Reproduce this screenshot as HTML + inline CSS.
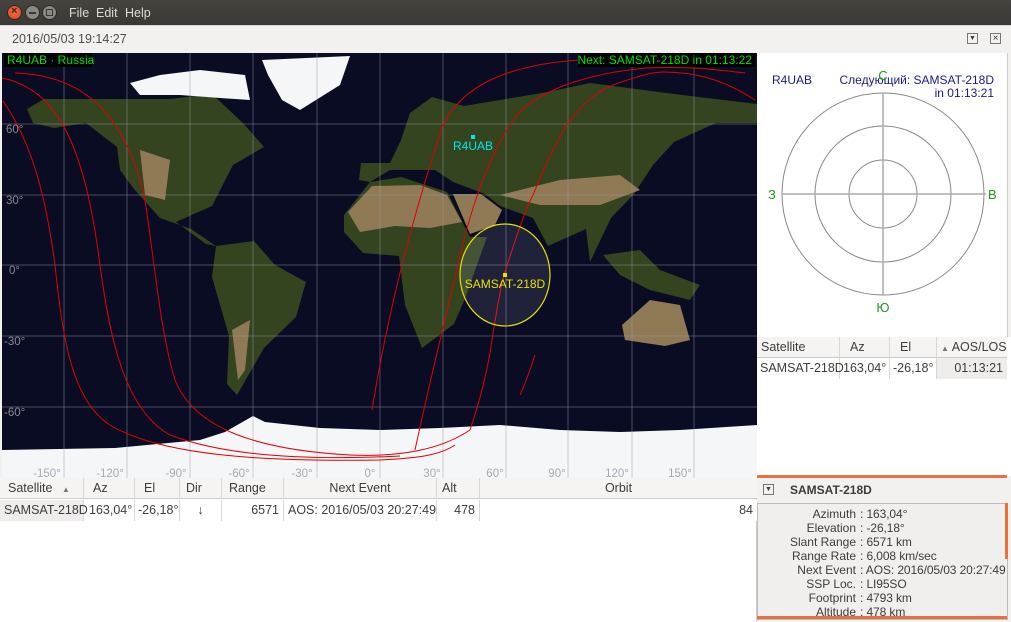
<!DOCTYPE html>
<html><head><meta charset="utf-8"><style>
*{margin:0;padding:0;box-sizing:border-box}
body{width:1011px;height:622px;overflow:hidden;background:#f2f1f0;font-family:"Liberation Sans","DejaVu Sans",sans-serif;font-size:12.5px;color:#3c3c3c;position:relative}
.abs{position:absolute}
.tb{left:0;top:0;width:1011px;height:25px;background:linear-gradient(#45443f,#3a3935);}
.btn{top:5px;width:15px;height:15px;border-radius:50%;}
.menu{top:6px;color:#dfdbd2;font-size:12.5px}
.hd{background:#f5f4f3;border-bottom:1px solid #cfcdca;height:21px}
.hd div,.row div{position:absolute;top:0;height:100%;line-height:21px;border-right:1px solid #dad8d5;padding:0 4px;white-space:nowrap}
.row{background:#fff;height:21px}
</style></head><body>
<div class="abs tb"></div>
<div class="abs btn" style="left:7px;background:radial-gradient(circle at 50% 40%,#f26d4a,#d9461f);border:1px solid #2b2a27"></div>
<div class="abs" style="left:11px;top:5px;color:#4a1b0c;font-size:11px;font-weight:bold">×</div>
<div class="abs btn" style="left:25px;background:#8a8984;border:1px solid #2b2a27"></div>
<div class="abs" style="left:29px;top:12px;width:7px;height:2px;background:#3a3935"></div>
<div class="abs btn" style="left:42px;background:#8a8984;border:1px solid #2b2a27"></div>
<div class="abs" style="left:46px;top:9px;width:7px;height:7px;border:1px solid #3a3935"></div>
<div class="abs menu" style="left:69px">File</div>
<div class="abs menu" style="left:96px">Edit</div>
<div class="abs menu" style="left:125px">Help</div>

<div class="abs" style="left:0;top:25px;width:1011px;height:28px;background:#f2f1f0;border-top:1px solid #d8d6d2"></div>
<div class="abs" style="left:12px;top:32px;font-size:12.5px;color:#4c4c4c">2016/05/03 19:14:27</div>
<div class="abs" style="left:967px;top:33px;width:11px;height:11px;border:1px solid #777;font-size:7px;line-height:9px;text-align:center">▼</div>
<div class="abs" style="left:990px;top:33px;width:11px;height:11px;border:1px solid #777;font-size:10px;line-height:9px;text-align:center">×</div>

<svg class="abs" style="left:2px;top:53px" width="755" height="427" viewBox="2 53 755 427">
<rect x="2" y="53" width="755" height="427" fill="#090c22"/>
<g fill="#34441f">
<polygon points="359,180 361,163 390,163 401,140 410,113 432,97 464,106 506,99 548,92 590,83 674,94 757,104 757,123 716,123 674,142 653,165 634,194 611,218 600,241 590,262 586,229 548,246 533,218 500,206 485,194 453,182 435,170 411,170 390,170 370,182"/>
<polygon points="344,215 370,182 401,177 447,192 470,237 487,237 464,301 454,324 422,348 405,305 399,256 363,253 344,232"/>
<polygon points="27,109 44,99 86,99 170,99 212,94 243,123 264,147 233,165 212,206 176,222 206,244 216,246 191,229 160,218 134,189 120,170 117,147 86,123 54,128 33,123"/>
<polygon points="216,246 254,241 275,265 306,282 296,317 264,348 237,395 227,384 229,336 212,277"/>
<polygon points="603,255 640,250 660,270 700,285 690,300 650,290 620,275"/>
</g>
<g fill="#8f7a55">
<polygon points="348,212 372,186 420,185 447,195 462,222 430,228 395,226 360,232"/>
<polygon points="453,194 470,234 495,225 502,210 481,194"/>
<polygon points="500,195 560,180 620,175 640,190 600,205 540,205"/>
<polygon points="622,325 650,300 680,305 690,340 665,346 625,340"/>
<polygon points="140,150 170,160 165,200 145,195"/>
<polygon points="232,330 250,320 245,370 238,380"/>
</g>
<g fill="#f4f6f8">
<polygon points="262,60 350,56 340,85 300,110 282,100 268,75"/>
<polygon points="130,83 160,75 200,70 245,75 250,100 220,98 180,95 140,95"/>
<path d="M2,450 L115,448 L200,440 L225,432 L253,416 L265,422 L320,428 L380,430 L440,428 L500,425 L560,430 L620,432 L680,430 L757,425 L757,480 L2,480 Z"/>
</g>
<g stroke="#9a9aa6" stroke-opacity="0.45" stroke-width="1">
<path d="M64,53V480M127,53V480M190,53V480M253,53V480M317,53V480M380,53V480M443,53V480M506,53V480M568,53V480M632,53V480M694,53V480"/>
<path d="M2,124H757M2,195H757M2,265H757M2,336H757M2,407H757"/>
</g>
<g fill="none" stroke="#e00000" stroke-width="1">
<path d="M3,101 C30,140 45,190 55,265 C62,330 70,400 110,425 C160,455 260,462 380,460 C420,458 440,455 455,445"/>
<path d="M2,78 C60,90 85,150 100,265 C110,340 125,410 170,435 C230,458 320,460 400,456"/>
<path d="M15,73 C80,75 125,110 145,200 C155,265 160,330 175,380 C195,430 260,450 350,455 C400,457 440,450 470,430"/>
<path d="M372,410 C385,330 405,240 443,125 C460,90 500,65 580,60 C650,57 700,56 750,57"/>
<path d="M415,450 C430,380 445,320 458,265 C470,210 490,150 517,115 C545,85 600,72 647,68 C690,66 720,70 745,73"/>
<path d="M470,430 C480,400 485,380 490,353 C495,320 500,290 504,275 C515,240 525,210 533,195 C545,165 560,135 567,125 C585,100 600,90 613,85 C640,75 655,72 663,72 C690,72 720,77 755,100"/>
<path d="M520,395 C525,385 530,370 535,355"/>
</g>
<ellipse cx="505" cy="275" rx="45" ry="51" fill="#c8c8e8" fill-opacity="0.12" stroke="#e8e000" stroke-width="1.2"/>
<rect x="503" y="273" width="4" height="4" fill="#e8e000"/>
<text x="505" y="288" fill="#e8e000" font-size="12" text-anchor="middle" font-family="Liberation Sans,DejaVu Sans,sans-serif">SAMSAT-218D</text>
<rect x="471" y="135" width="4" height="4" fill="#00e8e8"/>
<text x="473" y="150" fill="#00e8e8" font-size="12" text-anchor="middle" font-family="Liberation Sans,DejaVu Sans,sans-serif">R4UAB</text>
<g fill="#8a8a94" font-size="11.5" font-family="Liberation Sans,DejaVu Sans,sans-serif">
<text x="6" y="133">60°</text><text x="6" y="204">30°</text><text x="9" y="274">0°</text><text x="4" y="345">-30°</text><text x="4" y="416">-60°</text>
<g fill="#a8a8b0" text-anchor="middle"><text x="47" y="477">-150°</text><text x="110" y="477">-120°</text><text x="176" y="477">-90°</text><text x="239" y="477">-60°</text><text x="302" y="477">-30°</text><text x="370" y="477">0°</text><text x="432" y="477">30°</text><text x="495" y="477">60°</text><text x="557" y="477">90°</text><text x="617" y="477">120°</text><text x="680" y="477">150°</text></g>
</g>
<rect x="4" y="53" width="88" height="14" fill="#000"/>
<text x="7" y="64" fill="#00e000" font-size="12" font-family="Liberation Sans,DejaVu Sans,sans-serif">R4UAB · Russia</text>
<rect x="578" y="53" width="177" height="14" fill="#000"/>
<text x="752" y="64" fill="#00e000" font-size="12" text-anchor="end" font-family="Liberation Sans,DejaVu Sans,sans-serif">Next: SAMSAT-218D in 01:13:22</text>
</svg>

<div class="abs" style="left:757px;top:53px;width:250px;height:284px;background:#fff"></div>
<div class="abs" style="left:1007px;top:53px;width:1px;height:420px;background:#cfcdca"></div>
<svg class="abs" style="left:757px;top:53px" width="250" height="284" viewBox="757 53 250 284">
<g fill="none" stroke="#888" stroke-width="1">
<circle cx="883" cy="194" r="101"/><circle cx="883" cy="194" r="68"/><circle cx="883" cy="194" r="34"/>
</g>
<path d="M782,194H986M883,93V295" stroke="#aaa" stroke-width="1.5"/>
<g font-family="Liberation Sans,DejaVu Sans,sans-serif" font-size="12">
<text x="772" y="84" fill="#1a1a8a">R4UAB</text>
<text x="994" y="84" fill="#1a1a8a" text-anchor="end">Следующий: SAMSAT-218D</text>
<text x="994" y="97" fill="#1a1a8a" text-anchor="end">in 01:13:21</text>
<g fill="#1c9a1c" font-size="13"><text x="883" y="80" text-anchor="middle">С</text><text x="768" y="199">З</text><text x="988" y="199">В</text><text x="883" y="312" text-anchor="middle">Ю</text></g>
</g>
</svg>

<div class="abs" style="left:757px;top:337px;width:254px;height:139px;background:#fff"></div>
<div class="abs hd" style="left:757px;top:337px;width:250px">
<div style="left:0;width:83px">Satellite</div><div style="left:83px;width:50px;padding-left:10px">Az</div><div style="left:133px;width:47px;padding-left:10px">El</div><div style="left:180px;width:70px;border:none;text-align:right;padding-right:2px"><span style="color:#777;font-size:8px">▲</span> AOS/LOS</div>
</div>
<div class="abs row" style="left:757px;top:358px;width:250px">
<div style="left:0;width:83px;padding-left:3px">SAMSAT-218D</div><div style="left:83px;width:50px;padding-left:3px">163,04°</div><div style="left:133px;width:47px;padding-left:3px">-26,18°</div><div style="left:180px;width:70px;text-align:right;background:#eeedec;border:none">01:13:21</div>
</div>
<div class="abs" style="left:757px;top:475px;width:250px;height:3px;background:#ea7040"></div>
<div class="abs" style="left:763px;top:484px;width:11px;height:11px;border:1px solid #777;font-size:7px;line-height:9px;text-align:center">▼</div>
<div class="abs" style="left:790px;top:483px;font-weight:bold;font-size:12px;color:#3c3c3c">SAMSAT-218D</div>
<div class="abs" style="left:757px;top:503px;width:251px;height:117px;border:1px solid #bbb;background:#f0efee"></div>
<div class="abs" style="left:1005px;top:503px;width:3px;height:56px;background:#ea7040"></div>
<div class="abs" style="left:757px;top:616px;width:250px;height:3px;background:#ea7040"></div>
<div class="abs" style="left:757px;top:507px;width:99px;text-align:right;line-height:14px;font-size:12px">Azimuth<br>Elevation<br>Slant Range<br>Range Rate<br>Next Event<br>SSP Loc.<br>Footprint<br>Altitude</div>
<div class="abs" style="left:860px;top:507px;line-height:14px;font-size:12px;white-space:nowrap;letter-spacing:-0.1px">: 163,04°<br>: -26,18°<br>: 6571 km<br>: 6,008 km/sec<br>: AOS: 2016/05/03 20:27:49<br>: LI95SO<br>: 4793 km<br>: 478 km</div>

<div class="abs" style="left:0;top:478px;width:757px;height:144px;background:#fff;border-right:1px solid #cfcdca"></div>
<div class="abs hd" style="left:0;top:478px;width:757px">
<div style="left:0;width:84px;padding-left:8px">Satellite <span style="color:#777;font-size:8px;margin-left:6px">▲</span></div><div style="left:84px;width:51px;padding-left:9px">Az</div><div style="left:135px;width:45px;padding-left:9px">El</div><div style="left:180px;width:42px;padding-left:6px">Dir</div><div style="left:222px;width:62px;padding-left:7px">Range</div><div style="left:284px;width:153px;text-align:center">Next Event</div><div style="left:437px;width:43px;padding-left:5px">Alt</div><div style="left:480px;width:277px;text-align:center;border:none">Orbit</div>
</div>
<div class="abs row" style="left:0;top:500px;width:757px">
<div style="left:0;width:84px;padding-left:4px;background:#eeedec">SAMSAT-218D</div><div style="left:84px;width:51px;padding-left:5px">163,04°</div><div style="left:135px;width:45px;padding-left:3px">-26,18°</div><div style="left:180px;width:42px;text-align:center">↓</div><div style="left:222px;width:62px;text-align:right">6571</div><div style="left:284px;width:153px;padding-left:4px">AOS: 2016/05/03 20:27:49</div><div style="left:437px;width:43px;text-align:right">478</div><div style="left:480px;width:277px;text-align:right;border:none">84</div>
</div>
</body></html>
